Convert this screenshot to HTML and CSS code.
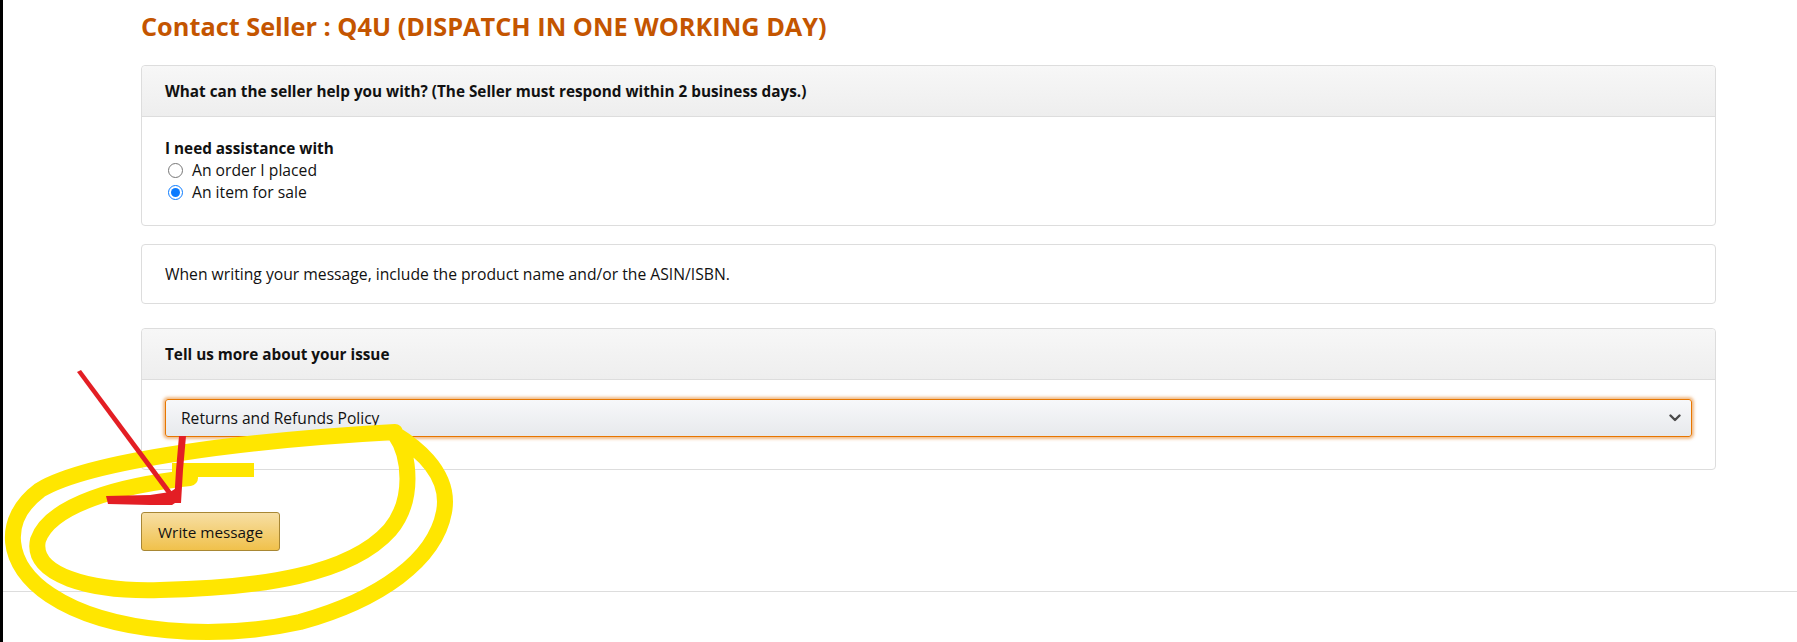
FILE: index.html
```html
<!DOCTYPE html>
<html lang="en">
<head>
<meta charset="utf-8">
<title>Contact Seller</title>
<link rel="stylesheet" href="styles.css">
</head>
<body>
<main class="page">
  <h1 class="title">Contact Seller : Q4U (DISPATCH IN ONE WORKING DAY)</h1>

  <section class="box">
    <div class="box-head">What can the seller help you with? (The Seller must respond within 2 business days.)</div>
    <div class="box-body">
      <div class="label">I need assistance with</div>
      <label class="radio"><input type="radio" name="topic"><span>An order I placed</span></label>
      <label class="radio"><input type="radio" name="topic" checked><span>An item for sale</span></label>
    </div>
  </section>

  <section class="box box-note">When writing your message, include the product name and/or the ASIN/ISBN.</section>

  <section class="box box-issue">
    <div class="box-head">Tell us more about your issue</div>
    <div class="box-body issue-body">
      <div class="dropdown">
        <span>Returns and Refunds Policy</span>
        <svg class="chev" width="12" height="8" viewBox="0 0 12 8"><path d="M1.5 1.5 L6 6 L10.5 1.5" fill="none" stroke="#4a4a4a" stroke-width="2.4" stroke-linecap="round" stroke-linejoin="round"/></svg>
      </div>
    </div>
  </section>

  <div class="actions"><button class="btn" type="button">Write message</button></div>
</main>
<hr class="rule">

<svg class="annotation" width="1797" height="642" viewBox="0 0 1797 642" aria-hidden="true">
  <g fill="none" stroke="#ffe600" stroke-width="16" stroke-linecap="round" stroke-linejoin="round">
    <path d="M190 478 C120 485 50 505 38 540 C30 575 90 592 160 590 C260 588 350 575 390 530 C415 500 410 455 395 434 C408 442 452 470 444 512 C435 560 380 600 300 622 C220 640 110 635 50 595 C5 565 0 520 40 490 C90 460 250 440 395 432"/>
  </g>
  <path d="M172 470 L254 470" stroke="#ffe600" stroke-width="14"/>
  <g fill="#e31e24">
    <path d="M77 372 L81 370 L175 496 L171 499 Z"/>
    <polygon points="179,436 186,436 183,470 181,503 174,503 176,470"/>
    <polygon points="106,496 150,495 170,492 178,487 181,499 172,505 150,505 108,504"/>
  </g>
</svg>
</body>
</html>
```

FILE: styles.css
```css
html, body {
  margin: 0;
}

body {
  position: relative;
  box-sizing: border-box;
  min-height: 642px;
  border-left: 3px solid #000;
  background: #fff;
  color: #111;
  font-family: "Open Sans", "Noto Sans", sans-serif;
  font-size: 15.7px;
  line-height: 22px;
}

.page {
  padding: 11px 81px 0 138px;
}

.title {
  margin: 0 0 23px;
  font-size: 25.3px;
  line-height: 31px;
  font-weight: 700;
  color: #c45500;
}

.box {
  border: 1px solid #dddddd;
  border-radius: 4px;
  background: #fff;
}

.box-head {
  padding: 14px 23px;
  background: linear-gradient(#f7f7f7, #eeeeee);
  border-bottom: 1px solid #dddddd;
  border-radius: 4px 4px 0 0;
  font-size: 15.3px;
  font-weight: 700;
}

.box-body {
  padding: 20px 23px 22px;
}

.label {
  font-size: 15.3px;
  font-weight: 700;
}

.radio {
  display: flex;
  align-items: center;
  height: 22px;
}

.radio input {
  width: 15px;
  height: 15px;
  margin: 0 9px 0 3px;
  accent-color: #0b7bff;
}

.box-note {
  margin-top: 18px;
  padding: 18px 23px;
}

.box-issue {
  margin-top: 24px;
}

.issue-body {
  padding: 19px 23px 32px;
}

.dropdown {
  display: flex;
  align-items: center;
  justify-content: space-between;
  box-sizing: border-box;
  height: 38px;
  padding: 0 10px 0 15px;
  border: 1px solid #e77600;
  border-radius: 3px;
  background: linear-gradient(#f7f8fa, #e7e9ec);
  box-shadow: 0 0 3px 2px rgba(228, 121, 17, 0.5);
  font-size: 15.6px;
}

.chev {
  display: block;
}

.actions {
  margin-top: 42px;
}

.btn {
  box-sizing: border-box;
  height: 39px;
  padding: 0 16px;
  border: 1px solid #a88734;
  border-radius: 3px;
  background: linear-gradient(#f7dfa5, #f0c14b);
  color: #111;
  font-family: "Open Sans", "Noto Sans", sans-serif;
  font-size: 15.3px;
}

.rule {
  height: 0;
  margin: 40px 0 0;
  border: 0;
  border-top: 1px solid #dddddd;
}

.annotation {
  position: absolute;
  left: -3px;
  top: 0;
  pointer-events: none;
}
```
